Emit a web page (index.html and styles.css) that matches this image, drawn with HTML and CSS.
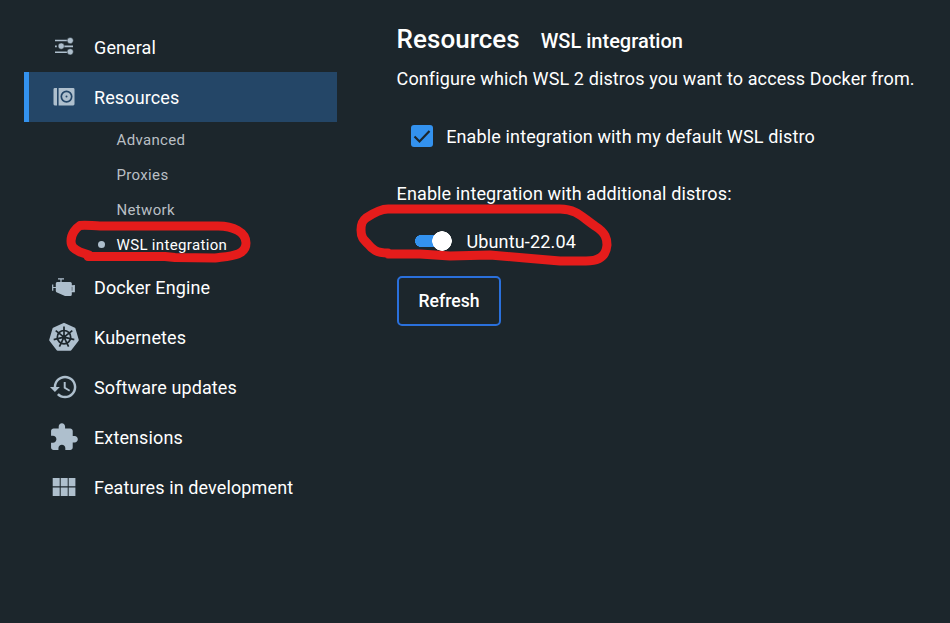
FILE: index.html
```html
<!DOCTYPE html>
<html lang="en">
<head>
<meta charset="utf-8">
<title>Settings</title>
<link rel="stylesheet" href="styles.css">
</head>
<body>
<div class="layout">
  <nav class="sidebar">
    <a class="item"><svg class="icon" viewBox="0 0 30 30"><g stroke="currentColor" stroke-width="1.6"><path d="M6 8.5h18M6 14.4h1.800M10 14.4h14M6 20.2h18"/></g><g fill="currentColor" class="knobs"><circle cx="21.2" cy="8.6" r="3.1"/><circle cx="12.2" cy="14.1" r="3.1"/><circle cx="21.2" cy="19.8" r="3.1"/></g></svg><span>General</span></a>
    <a class="item active"><svg class="icon" viewBox="0 0 30 30"><path fill="currentColor" d="M5.8 6H8v17.4H5.8a1.3 1.3 0 0 1-1.3-1.3V7.3A1.3 1.3 0 0 1 5.8 6zM9.6 6h14.6a1.3 1.3 0 0 1 1.3 1.3v14.8a1.3 1.3 0 0 1-1.3 1.3H9.6z"/><circle class="dial" cx="17.5" cy="14.6" r="5.2"/><circle class="dial-dot" cx="17.5" cy="14.6" r="1"/></svg><span>Resources</span></a>
    <div class="sub">
      <a class="subitem">Advanced</a>
      <a class="subitem">Proxies</a>
      <a class="subitem">Network</a>
      <a class="subitem current"><i class="dot"></i>WSL integration
        <svg class="mark mark-nav" viewBox="0 0 210 65"><path d="M39 45L30 42C24 39 21 37 21 31C21 24 26 18 30 15.500C36 14.500 43 16 50 16H168C183 16 196 22 196 33C196 46 180 46 165 48L125 47.500L115 46.500H38"/></svg></a>
    </div>
    <a class="item"><svg class="icon" viewBox="0 0 30 30"><path fill="currentColor" d="M8.400 10H21.300a1.500 1.500 0 0 1 1.500 1.500v11a1.500 1.500 0 0 1-1.500 1.500h-5.300L8 20.500a1.700 1.700 0 0 1-1.200-1.500v-7.400A1.500 1.500 0 0 1 8.400 10z"/><path fill="none" stroke="currentColor" stroke-width="1.2" d="M9 6.900h6M12 7V11M3.700 12.500v6.300M3.700 15.500H8"/><path fill="none" stroke="currentColor" stroke-width="1.4" d="M22 14h2v5.500H22M25.200 13v7.300"/></svg><span>Docker Engine</span></a>
    <a class="item"><svg class="icon" viewBox="0 0 30 30"><path fill="currentColor" stroke="currentColor" stroke-width="2" stroke-linejoin="round" d="M15 1.800L25.500 6.700L28.800 18.100L21.500 27.700H8.500L1.200 18.100L4.500 6.700z"/><g class="wheel"><circle cx="15" cy="15.200" r="6.700"/><circle cx="15" cy="15.200" r="1.300"/><path d="M15 15.200V4.600M15 15.200L23.300 8.600M15 15.200L25.300 17.600M15 15.200L19.600 24.700M15 15.200L10.400 24.700M15 15.200L4.700 17.600M15 15.200L6.700 8.600"/></g></svg><span>Kubernetes</span></a>
    <a class="item"><svg class="icon" viewBox="0 0 24 24"><g transform="translate(-.9 -.35) scale(1.04)"><path fill="currentColor" d="M13.200 3.200c-4.800 0-8.700 3.900-8.700 8.700H1.600l3.800 3.800 3.800-3.800H6.400c0-3.800 3-6.800 6.800-6.800s6.800 3 6.800 6.800-3 6.800-6.800 6.800c-1.900 0-3.600-.8-4.800-2L7 18.100c1.600 1.600 3.800 2.500 6.200 2.500 4.800 0 8.700-3.900 8.700-8.700s-3.900-8.700-8.700-8.700zM12.200 8v4.900l4.200 2.400.7-1.200-3.400-2V8z"/></g></svg><span>Software updates</span></a>
    <a class="item"><svg class="icon" viewBox="0 0 24 24"><g transform="translate(-.4 0) scale(1.02)"><path fill="currentColor" d="M20.500 11H19V7c0-1.100-.9-2-2-2h-4V3.500C13 2.120 11.880 1 10.500 1S8 2.120 8 3.500V5H4c-1.100 0-1.990.9-1.990 2v3.800H3.500c1.490 0 2.700 1.210 2.700 2.700s-1.210 2.700-2.700 2.700H2V20c0 1.100.9 2 2 2h3.800v-1.500c0-1.490 1.210-2.700 2.700-2.700s2.700 1.210 2.700 2.700V22H17c1.100 0 2-.9 2-2v-4h1.500c1.380 0 2.500-1.120 2.500-2.500S21.880 11 20.500 11z"/></g></svg><span>Extensions</span></a>
    <a class="item"><svg class="icon" viewBox="0 0 30 30"><path fill="currentColor" d="M3.700 6h7v8.200h-7zM11.700 6h7v8.200h-7zM19.700 6h6.700v8.200h-6.700zM3.700 15.600h7v8.300h-7zM11.700 15.600h7v8.300h-7zM19.700 15.600h6.700v8.300h-6.700z"/></svg><span>Features in development</span></a>
  </nav>
  <main class="content">
    <header class="heading"><h1>Resources</h1><h2>WSL integration</h2></header>
    <p class="intro">Configure which WSL 2 distros you want to access Docker from.</p>
    <div class="check-row"><span class="checkbox"><svg viewBox="0 0 22 22"><path d="M3.500 11.500l5 5L18.500 6"/></svg></span><span class="check-label">Enable integration with my default WSL distro</span></div>
    <p class="additional">Enable integration with additional distros:</p>
    <div class="toggle-row"><span class="switch"></span><span class="distro">Ubuntu-22.04</span>
      <svg class="mark mark-distro" viewBox="0 0 270 140"><path d="M38 58C26 58 22 54 18 49C13 44 11 42 11 35C11 29 12 26 16 23C22 19 30 14 38 14H210C226 14 232 22 245 31C256 38 257 44 257 50C256 62 248 66 236 66H210L175 63L140 60L100 61L70 59H38"/></svg>
    </div>
    <button class="refresh">Refresh</button>
  </main>
</div>
</body>
</html>
```
FILE: styles.css
```css
* { box-sizing: border-box; }
body {
  margin: 0;
  height: 623px;
  overflow: hidden;
  background: #1c262c;
  color: #fff;
  font-family: Roboto, "Liberation Sans", sans-serif;
  font-size: 18px;
  letter-spacing: .115px;
}
.layout { display: flex; padding: 22px 0 0 24px; }
.sidebar { width: 313px; flex: none; }
.item {
  display: flex;
  align-items: center;
  height: 50px;
  padding-left: 25px;
  gap: 15px;
}
.item span { line-height: 24px; padding-top: 1px; }
.active { background: #244667; border-left: 5px solid #3392ef; padding-left: 20px; }
.icon { width: 30px; height: 30px; color: #aebfcd; flex: none; }
.knobs { stroke: #1c262c; stroke-width: .5; }
.dial { fill: none; stroke: #244667; stroke-width: 1.7; }
.dial-dot { fill: #244667; }
.wheel { fill: none; stroke: #1c262c; stroke-width: 1.7; }
.subitem {
  display: flex;
  align-items: center;
  position: relative;
  height: 35px;
  padding-left: 92.5px;
  font-size: 15px;
  letter-spacing: .34px;
  color: #b9bfc4;
}
.current { color: #fff; padding-left: 74px; }
.dot { width: 7px; height: 7px; border-radius: 50%; background: #aebfcd; margin-right: 11.5px; }
.mark { position: absolute; fill: none; stroke: #e51c1b; stroke-width: 9; stroke-linejoin: round; stroke-linecap: round; }
.mark-nav { width: 210px; height: 65px; left: 26px; top: -17px; }
.mark-distro { width: 270px; height: 140px; left: -46.6px; top: -31px; }
.content { margin-left: 59.6px; width: 540px; }
.heading { display: flex; align-items: baseline; gap: 21px; height: 36px; letter-spacing: 0; }
h1, h2 { margin: 0; font-weight: 500; }
h1 { font-size: 26px; line-height: 34px; letter-spacing: .05px; }
h2 { font-size: 20px; }
p { margin: 0; line-height: 24px; }
.intro { padding-top: 9px; }
.check-row { display: flex; align-items: center; gap: 13.6px; padding-left: 14px; height: 24px; margin-top: 33px; letter-spacing: .13px; }
.checkbox { width: 22px; height: 22px; background: #3392ef; border-radius: 3px; }
.checkbox svg { display: block; width: 22px; height: 22px; fill: none; stroke: #1c262c; stroke-width: 2.2; }
.additional { margin-top: 34px; }
.toggle-row { position: relative; display: flex; align-items: center; height: 30px; margin-top: 20px; padding-left: 18.4px; gap: 14.4px; letter-spacing: .16px; }
.switch { width: 37px; height: 20px; background: radial-gradient(circle at 27px 10px, #fff 9.500px, transparent 10px), linear-gradient(#3392ef, #3392ef) 6px 4px / 22px 12px no-repeat, radial-gradient(circle at 6px 10px, #3392ef 5.700px, transparent 6.200px); }
.refresh {
  display: block;
  width: 104px;
  height: 50px;
  margin: 20px 0 0 .4px;
  padding: 0;
  border: 2px solid #2a70dc;
  border-radius: 5px;
  background: transparent;
  color: #fff;
  font: 500 17.6px Roboto, sans-serif;
}
```
